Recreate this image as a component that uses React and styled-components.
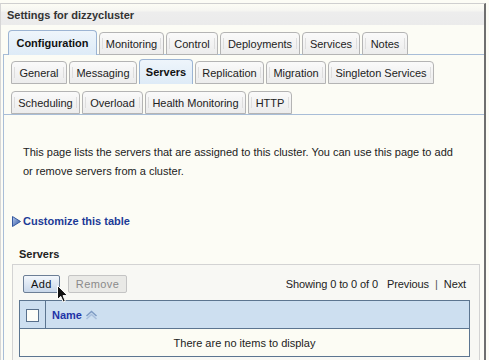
import React from "react";
import { styled, createGlobalStyle } from "styled-components";

const GlobalStyle = createGlobalStyle`
	html, body {
		margin: 0;
		padding: 0;
		background: #fcfcf5;
	}
	body {
		width: 489px;
		height: 360px;
		overflow: hidden;
		font-family: "Liberation Sans", Arial, sans-serif;
		font-size: 11px;
		color: #222;
	}
`;

const mainTabs = [
	{ label: "Configuration", w: 89, active: true },
	{ label: "Monitoring", w: 65 },
	{ label: "Control", w: 52 },
	{ label: "Deployments", w: 80 },
	{ label: "Services", w: 58 },
	{ label: "Notes", w: 46 },
];

const subTabsOne = [
	{ label: "General", w: 56 },
	{ label: "Messaging", w: 68 },
	{ label: "Servers", w: 54, active: true },
	{ label: "Replication", w: 69 },
	{ label: "Migration", w: 60 },
	{ label: "Singleton Services", w: 106 },
];

const subTabsTwo = [
	{ label: "Scheduling", w: 69 },
	{ label: "Overload", w: 61 },
	{ label: "Health Monitoring", w: 101 },
	{ label: "HTTP", w: 44 },
];

function TabRow({ tabs }) {
	return tabs.map((t) => (
		<Tab key={t.label} $w={t.w} $active={t.active}>
			{t.label}
		</Tab>
	));
}

function TriangleIcon() {
	return (
		<svg width="9" height="11" viewBox="0 0 9 11">
			<defs>
				<linearGradient id="tri" x1="0" y1="0" x2="1" y2="1">
					<stop offset="0" stopColor="#b9cdf0" />
					<stop offset="1" stopColor="#2a4f9e" />
				</linearGradient>
			</defs>
			<polygon points="0.5,0.5 8.5,5.5 0.5,10.5" fill="url(#tri)" stroke="#35589f" strokeWidth="1" />
		</svg>
	);
}

function SortIcon() {
	return (
		<svg width="13" height="10" viewBox="0 0 13 10">
			<polyline points="1.5,6 6.5,1.5 11.5,6" fill="none" stroke="#7f9cc4" strokeWidth="1.6" />
			<polyline points="1.5,9 6.5,4.5 11.5,9" fill="none" stroke="#a9bfdc" strokeWidth="1.6" />
		</svg>
	);
}

function Cursor() {
	return (
		<CursorBox>
			<svg width="11" height="18" viewBox="0 0 11 18">
				<path
					d="M0.5,0.5 L0.5,14.5 L3.8,11.4 L6.2,17 L8.3,16.1 L6,10.6 L10.5,10.6 Z"
					fill="#111"
					stroke="#fff"
					strokeWidth="1"
					strokeLinejoin="round"
				/>
			</svg>
		</CursorBox>
	);
}

export default function App() {
	return (
		<>
			<GlobalStyle />
			<Frame>
				<Header>Settings for dizzycluster</Header>
				<MainTabBar>
					<TabRow tabs={mainTabs} />
				</MainTabBar>
				<Panel>
					<SubTabs>
						<SubRow>
							<TabRow tabs={subTabsOne} />
						</SubRow>
						<SubRow>
							<TabRow tabs={subTabsTwo} />
						</SubRow>
					</SubTabs>
					<Intro>
						This page lists the servers that are assigned to this cluster. You can use this page to add
						<br />
						or remove servers from a cluster.
					</Intro>
					<Customize>
						<TriangleIcon />
						<span>Customize this table</span>
					</Customize>
					<SectionTitle>Servers</SectionTitle>
					<TableBox>
						<Toolbar>
							<Button>Add</Button>
							<Button disabled>Remove</Button>
							<Pager>
								Showing 0 to 0 of 0<PagerGap />Previous<Sep>|</Sep>Next
							</Pager>
							<Cursor />
						</Toolbar>
						<Table>
							<thead>
								<tr>
									<CheckCell>
										<CheckBox />
									</CheckCell>
									<NameHead>
										<span>Name</span>
										<SortIcon />
									</NameHead>
								</tr>
							</thead>
							<tbody>
								<tr>
									<EmptyCell colSpan={2}>There are no items to display</EmptyCell>
								</tr>
							</tbody>
						</Table>
					</TableBox>
				</Panel>
			</Frame>
		</>
	);
}

const Frame = styled.div`
	position: relative;
	box-sizing: border-box;
	width: 486px;
	height: 357px;
	margin-top: 3px;
	border-top: 1px solid #cfcfcf;
	border-left: 1px solid #d6d6d6;
	border-right: 2px solid #6f6f6f;
	display: flex;
	flex-direction: column;
`;

const Header = styled.div`
	height: 21px;
	line-height: 22px;
	padding-left: 6px;
	font-weight: bold;
	color: #333;
	background: linear-gradient(#fcfcf4 0%, #f6f6f2 30%, #ededed 40%, #ebebeb 100%);
`;

const MainTabBar = styled.div`
	display: flex;
	align-items: flex-end;
	gap: 2px;
	height: 24px;
	margin-top: 6px;
	padding-left: 7px;
	position: relative;
	z-index: 1;
	margin-bottom: -1px;
`;

const Tab = styled.div`
	position: relative;
	box-sizing: border-box;
	width: ${(p) => p.$w}px;
	height: ${(p) => (p.$active ? 25 : 23)}px;
	display: flex;
	align-items: center;
	justify-content: center;
	padding-top: ${(p) => (p.$active ? 0 : 1)}px;
	border: 1px solid ${(p) => (p.$active ? "#9cb4d3" : "#b4b4b4")};
	border-bottom: ${(p) => (p.$active ? "none" : "1px solid #b4b4b4")};
	border-radius: 4px 4px 0 0;
	background: ${(p) =>
		p.$active
			? "linear-gradient(#eef5fb, #deebf7)"
			: "linear-gradient(#fafafa, #ececec)"};
	font-weight: ${(p) => (p.$active ? "bold" : "normal")};
	color: ${(p) => (p.$active ? "#111" : "#222")};
	white-space: nowrap;
	&::before,
	&::after {
		content: "";
		position: absolute;
		top: 5px;
		bottom: 5px;
		width: 1px;
		background: ${(p) => (p.$active ? "transparent" : "#dedede")};
	}
	&::before {
		left: 2px;
	}
	&::after {
		right: 2px;
	}
`;

const Panel = styled.div`
	flex: 1;
	margin-left: 2px;
	border-top: 1px solid #a8bdd7;
	border-left: 1px solid #a8bdd7;
	display: flex;
	flex-direction: column;
	align-items: flex-start;
`;

const SubTabs = styled.div`
	align-self: stretch;
	display: flex;
	flex-direction: column;
	gap: 6px;
	padding: 5px 0 0 7px;
	border-bottom: 1px solid #a8bdd7;
`;

const SubRow = styled.div`
	display: flex;
	align-items: flex-end;
	gap: 2px;
	height: 24px;
`;

const Intro = styled.p`
	margin: 28px 0 0 19px;
	line-height: 19px;
	color: #222;
`;

const Customize = styled.div`
	display: flex;
	align-items: center;
	gap: 2px;
	margin: 32px 0 0 8px;
	height: 16px;
	font-weight: bold;
	color: #1c3b97;
`;

const SectionTitle = styled.div`
	margin: 17px 0 0 15px;
	height: 16px;
	line-height: 16px;
	font-weight: bold;
	color: #222;
`;

const TableBox = styled.div`
	align-self: stretch;
	margin: 2px 4px 0 8px;
	padding: 0 9px 0 6px;
	flex: 1;
	border: 1px solid #d3d3d3;
	border-bottom: none;
	background: #f8f8f4;
`;

const Toolbar = styled.div`
	position: relative;
	display: flex;
	align-items: center;
	gap: 8px;
	padding: 10px 4px 7px 4px;
`;

const Button = styled.button`
	box-sizing: border-box;
	height: 18px;
	padding: 0 6px;
	font-family: "Liberation Sans", Arial, sans-serif;
	font-size: 11px;
	letter-spacing: 0.4px;
	border-radius: 2px;
	border: 1px solid ${(p) => (p.disabled ? "#c4c4c4" : "#6c7e96")};
	background: ${(p) =>
		p.disabled ? "#e9e9e6" : "linear-gradient(#f3f7fc, #c8d7ea)"};
	color: ${(p) => (p.disabled ? "#8a8a8a" : "#111")};
	width: ${(p) => (p.disabled ? 59 : 37)}px;
`;

const Pager = styled.div`
	margin-left: auto;
	display: flex;
	align-items: center;
	color: #222;
	letter-spacing: -0.1px;
`;

const PagerGap = styled.span`
	width: 9px;
`;

const Sep = styled.span`
	margin: 0 6px;
	color: #555;
`;

const CursorBox = styled.div`
	position: absolute;
	left: 38px;
	top: 20px;
	line-height: 0;
`;

const Table = styled.table`
	width: 100%;
	border-collapse: collapse;
	border: 1px solid #5c7590;
`;

const CheckCell = styled.th`
	width: 25px;
	height: 27px;
	padding: 0;
	background: #cddff0;
	border-right: 1px solid #5c7590;
	border-bottom: 1px solid #5c7590;
	text-align: center;
	vertical-align: middle;
`;

const CheckBox = styled.div`
	display: inline-block;
	box-sizing: border-box;
	width: 13px;
	height: 13px;
	margin-top: 3px;
	border: 1px solid #58708c;
	background: #fdfdf8;
`;

const NameHead = styled.th`
	padding: 0 0 0 6px;
	background: #cddff0;
	border-bottom: 1px solid #5c7590;
	text-align: left;
	font-weight: bold;
	color: #1f33a6;
	& span {
		margin-right: 3px;
	}
	& svg {
		vertical-align: -1px;
	}
`;

const EmptyCell = styled.td`
	height: 27px;
	padding: 0;
	text-align: center;
	background: #fcfcf4;
	color: #222;
`;
